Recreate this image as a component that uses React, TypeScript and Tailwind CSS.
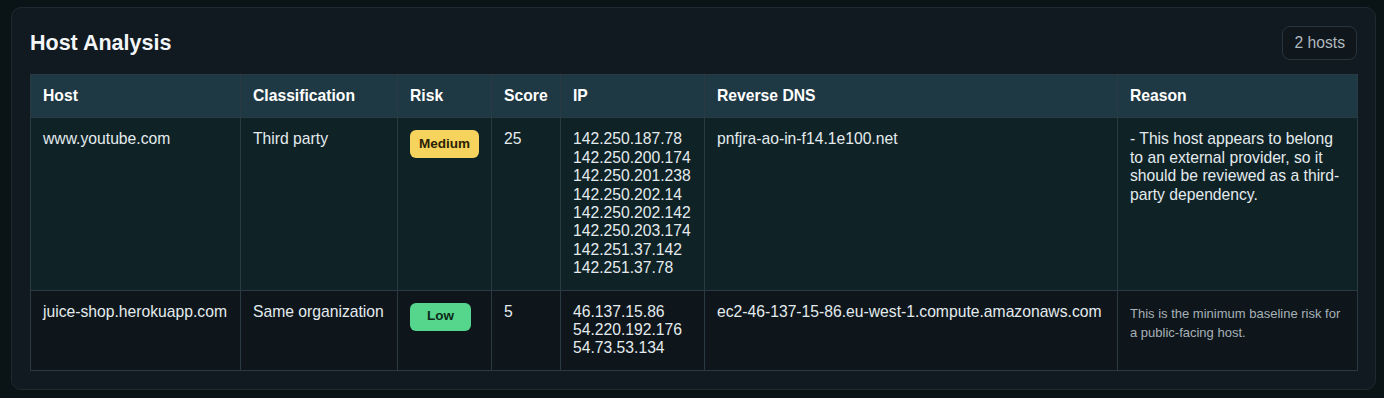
const hosts = [
  {
    host: "www.youtube.com",
    classification: "Third party",
    risk: "Medium",
    score: 25,
    ips: [
      "142.250.187.78",
      "142.250.200.174",
      "142.250.201.238",
      "142.250.202.14",
      "142.250.202.142",
      "142.250.203.174",
      "142.251.37.142",
      "142.251.37.78",
    ],
    dns: "pnfjra-ao-in-f14.1e100.net",
    reason: "- This host appears to belong to an external provider, so it should be reviewed as a third-party dependency.",
  },
  {
    host: "juice-shop.herokuapp.com",
    classification: "Same organization",
    risk: "Low",
    score: 5,
    ips: ["46.137.15.86", "54.220.192.176", "54.73.53.134"],
    dns: "ec2-46-137-15-86.eu-west-1.compute.amazonaws.com",
    reason: "This is the minimum baseline risk for a public-facing host.",
  },
];

const RiskBadge = ({ risk }: { risk: string }) => {
  const cls = risk === "Medium" ? "bg-[#f5d35c] text-[#2b2205]" : "bg-[#55d68c] text-[#0c2a18]";
  return (
    <span
      className={`inline-flex h-[28px] min-w-[61px] items-center justify-center rounded-[6px] px-[9px] text-[13.5px] font-bold ${cls}`}
    >
      {risk}
    </span>
  );
};

const cell = "border border-[#2a3a43] px-[12px] py-[12px] align-top leading-[18.4px]";

export default function App() {
  const headers = ["Host", "Classification", "Risk", "Score", "IP", "Reverse DNS", "Reason"];
  return (
    <div
      className="min-h-[398px] bg-[#0a1315] pt-[7px] pb-[10px] pl-[11px] pr-[8px]"
      style={{ fontFamily: '"Liberation Sans", Arial, sans-serif' }}
    >
      <div className="rounded-[10px] border border-[#1e2a31] bg-[#111a20] p-[18px]">
        {/* Header */}
        <div className="mb-[14px] flex items-center justify-between">
          <h2 className="text-[21.5px] font-bold text-[#f3f6f8]">Host Analysis</h2>
          <span className="flex h-[34px] items-center rounded-[8px] border border-[#27343c] bg-[#0f171c] px-[11px] text-[15.7px] text-[#aeb8bf]">
            2 hosts
          </span>
        </div>

        {/* Table */}
        <table className="w-full table-fixed border-collapse border border-[#2a3a43] text-[15.7px] text-[#e4ebee]">
          <colgroup>
            <col className="w-[210px]" />
            <col className="w-[157px]" />
            <col className="w-[94px]" />
            <col className="w-[69px]" />
            <col className="w-[144px]" />
            <col className="w-[413px]" />
            <col className="w-[240px]" />
          </colgroup>
          <thead>
            <tr className="bg-[#1f3944]">
              {headers.map((h) => (
                <th key={h} className={`${cell} text-left font-bold text-white`}>
                  {h}
                </th>
              ))}
            </tr>
          </thead>
          <tbody>
            {hosts.map((h, i) => (
              <tr key={h.host} className={i === 0 ? "bg-[#0f2226]" : "bg-[#0e161b]"}>
                <td className={`${cell} whitespace-nowrap`}>{h.host}</td>
                <td className={`${cell} whitespace-nowrap`}>{h.classification}</td>
                <td className={cell}>
                  <RiskBadge risk={h.risk} />
                </td>
                <td className={cell}>{h.score}</td>
                <td className={cell}>
                  {h.ips.map((ip) => (
                    <div key={ip}>{ip}</div>
                  ))}
                </td>
                <td className={`${cell} whitespace-nowrap`}>{h.dns}</td>
                <td className={cell}>
                  {i === 0 ? (
                    h.reason
                  ) : (
                    <div className="pt-[1px] text-[13px] leading-[19px] text-[#a7b1b8]">{h.reason}</div>
                  )}
                </td>
              </tr>
            ))}
          </tbody>
        </table>
      </div>
    </div>
  );
}
